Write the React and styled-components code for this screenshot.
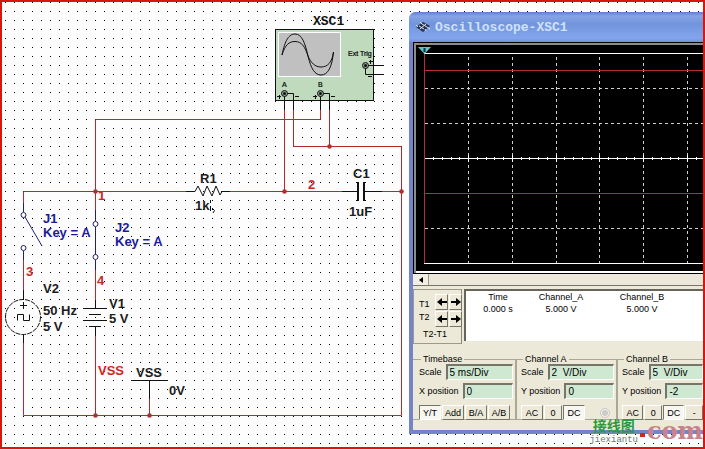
import styled, { createGlobalStyle } from "styled-components";

const RED = "#b8292b";
const NAVY = "#22226a";

const WIRES = [
  "M320.5 110V119.5H95.5V210",
  "M284.5 110V191",
  "M293.5 110V146.5H401.5V415.5",
  "M329.5 110V146",
  "M23.5 203V191.5H186",
  "M230 191.5H342",
  "M382 191.5H401",
  "M23.5 260V290",
  "M95.5 270V300",
  "M23.5 343V415.5H401.5",
  "M95.5 336V415",
  "M149.5 399V415",
];

const LEADS = [
  "M284.5 96V110",
  "M287 93.5H293.5V110",
  "M320.5 96V110",
  "M323 93.5H329.5V110",
  "M368 65.5H384",
  "M365.5 68V74.5H384",
  "M186 191.5H195L198 186L203 196L207 186L212 196L216 186L220 195L222 191.5H230",
  "M342 191.5H357M366 191.5H382",
  "M23.5 290V299M23.5 335V343",
  "M20 305.5H27M23.5 302V309",
  "M17.5 320.5V314.5H23.5V320.5H29.5V314.5",
  "M95.5 300V308M95.5 326V336",
  "M83 308.5H107M89 314.5H101M83 320.5H107M89 326.5H101",
  "M131 380.5H168M149.5 381V399",
];

const JUNCTIONS = [
  [95, 191],
  [284, 191],
  [401, 191],
  [329, 146],
  [95, 415],
  [149, 415],
];

const LABELS = [
  { x: 200, y: 183, text: "R1" },
  { x: 195, y: 210, text: "1k" },
  { x: 353, y: 178, text: "C1" },
  { x: 349, y: 216, text: "1uF" },
  { x: 43, y: 293, text: "V2" },
  { x: 43, y: 315, text: "50 Hz" },
  { x: 43, y: 331, text: "5 V" },
  { x: 109, y: 308, text: "V1" },
  { x: 109, y: 323, text: "5 V" },
  { x: 136, y: 377, text: "VSS" },
  { x: 169, y: 395, text: "0V" },
  { x: 43, y: 223, text: "J1", color: "#1a1aa0" },
  { x: 43, y: 237, text: "Key = A", color: "#1a1aa0" },
  { x: 115, y: 232, text: "J2", color: "#1a1aa0" },
  { x: 115, y: 246, text: "Key = A", color: "#1a1aa0" },
  { x: 98, y: 200, text: "1", color: "#c8282a" },
  { x: 308, y: 189, text: "2", color: "#c8282a" },
  { x: 26, y: 276, text: "3", color: "#c8282a" },
  { x: 97, y: 285, text: "4", color: "#c8282a" },
  { x: 98, y: 375, text: "VSS", color: "#d81e1e" },
];

const TERMINALS = [
  [284, 93],
  [320, 93],
  [365, 65],
];

function Schematic() {
  return (
    <SchematicArea viewBox="2 2 407 445">
      {WIRES.map((d) => (
        <Line key={d} d={d} $color={RED} />
      ))}

      <ScopeName x="313" y="25">
        XSC1
      </ScopeName>
      <rect x="275.5" y="29.5" width="98" height="71" fill="#bfdabd" stroke="#111" />
      <rect x="278.5" y="32.5" width="62" height="44" fill="#c0c0c0" stroke="#fff" />
      <Line d="M282 55C285 40 289 34 295 34C302 34 305 43 308 56C311 69 315 75 321 75C328 75 332 67 333.5 52" />
      <Line d="M282 55C285 45 289 41.5 295 41.5C302 41.5 305 47 308 56C311 63 315 67 321 67C328 67 332 62 333.5 52" />
      {LEADS.map((d) => (
        <Line key={d} d={d} />
      ))}
      {TERMINALS.map(([x, y]) => (
        <g key={`${x}-${y}`}>
          <circle cx={x + 0.5} cy={y + 0.5} r="3" fill="#8fa48e" stroke="#111" />
          <circle cx={x + 0.5} cy={y + 0.5} r="1.5" fill="#111" />
        </g>
      ))}
      <Line d="M277 96.5H281M279.5 95V99M295 96.5H299M313 96.5H317M315.5 95V99M331 96.5H335" />
      <Line d="M369 61.5H373M370.5 60V64M368 76.5H372" />
      <PinLabel x="282" y="87">
        A
      </PinLabel>
      <PinLabel x="318" y="87">
        B
      </PinLabel>
      <PinLabel x="348" y="56">
        Ext Trig
      </PinLabel>

      <Line
        $color={NAVY}
        d="M23.5 203V212M25 217L42 246M23.5 251V260M95.5 210V221M95.5 227V254M95.5 260V270"
      />
      {[
        [23.5, 215],
        [23.5, 248],
        [95.5, 224],
        [95.5, 257],
      ].map(([x, y]) => (
        <circle key={`${x}-${y}`} cx={x} cy={y} r="2.5" fill="#fff" stroke={NAVY} />
      ))}
      <circle cx="23" cy="317" r="17.5" fill="none" stroke="#111" strokeDasharray="5 1" />
      <path d="M358 182V201M364 182V201" stroke="#111" strokeWidth="2" />
      <Line d="M210.5 200V203M210.5 206V211M212 208L214.5 210.5L213 213" />

      {JUNCTIONS.map(([x, y]) => (
        <circle key={`${x}-${y}`} cx={x + 0.5} cy={y + 0.5} r="2.3" fill={RED} />
      ))}
      {LABELS.map((label) => (
        <PartLabel key={`${label.x}-${label.y}`} x={label.x} y={label.y} $color={label.color}>
          {label.text}
        </PartLabel>
      ))}
    </SchematicArea>
  );
}

const COLUMNS = Array.from({ length: 24 }, (_, i) => Math.round(468 + i * 43.8));

function ScopeGrid() {
  return (
    <Grid>
      <g transform="translate(-416 -45)" fill="none" shapeRendering="crispEdges">
        <path d="M424 53.5H1600M424 263.5H1600" stroke="#fff" />
        <path
          d="M425 88.5H1600M425 123.5H1600M425 228.5H1600"
          stroke="#d0d0d0"
          strokeDasharray="3 3"
        />
        {COLUMNS.map((x) => (
          <path key={x} d={`M${x}.5 57V263`} stroke="#d0d0d0" strokeDasharray="3 3" />
        ))}
        <path d="M425 158.5H1600" stroke="#fff" />
        <path
          d="M433 158.5H1600"
          stroke="#fff"
          strokeWidth="3"
          strokeDasharray="1 7.76"
        />
        {COLUMNS.map((x) => (
          <path key={x} d={`M${x}.5 155V162`} stroke="#fff" />
        ))}
        <path d="M424.5 54V263M424 70.5H1600M424 193.5H1600" stroke="#b82c38" />
      </g>
      <g transform="translate(-416 -45)">
        <path d="M418 47H431L424.5 54Z" fill="#56c8c8" />
        <path d="M424.5 48V52" stroke="#0b2a4a" strokeWidth="2" />
      </g>
    </Grid>
  );
}

function TitleIcon() {
  return (
    <svg width="16" height="12" viewBox="0 0 16 12">
      <path d="M1 6L8 1L15 5L8 11Z" fill="#26304f" />
      <path
        d="M4 5L9 8M7 3L12 6M5 8L11 3M1 4L3 6M11 10L10 8M5 1L7 3M15 8L12 6"
        stroke="#dfe6f5"
        fill="none"
      />
    </svg>
  );
}

function Arrow({ right }) {
  return (
    <svg width="10" height="8" viewBox="0 0 10 8">
      <path
        d={right ? "M10 4L5 0V3H0V5H5V8Z" : "M0 4L5 0V3H10V5H5V8Z"}
        fill="#000"
      />
    </svg>
  );
}

function Group({ title, id, scale, axis, position, children }) {
  return (
    <GroupBox>
      <legend>{title}</legend>
      <Field>
        <label htmlFor={`${id}-scale`}>Scale</label>
        <ValueInput id={`${id}-scale`} defaultValue={scale} />
      </Field>
      <Field>
        <label htmlFor={`${id}-position`}>{axis} position</label>
        <ValueInput id={`${id}-position`} defaultValue={position} />
      </Field>
      <ButtonRow>{children}</ButtonRow>
    </GroupBox>
  );
}

function Oscilloscope() {
  return (
    <Window>
      <TitleBar>
        <TitleIcon />
        <Title>Oscilloscope-XSC1</Title>
      </TitleBar>
      <Body>
        <Display>
          <ScopeGrid />
        </Display>
        <ScrollBar>
          <ScrollButton aria-label="Scroll left">
            <svg width="4" height="6" viewBox="0 0 4 6">
              <path d="M0 3L4 0V6Z" />
            </svg>
          </ScrollButton>
        </ScrollBar>

        <Readout>
          <Cursors>
            <CursorNames>
              <span>T1</span>
              <span>T2</span>
            </CursorNames>
            <CursorButton aria-label="T1 left">
              <Arrow />
            </CursorButton>
            <CursorButton aria-label="T1 right">
              <Arrow right />
            </CursorButton>
            <CursorButton aria-label="T2 left">
              <Arrow />
            </CursorButton>
            <CursorButton aria-label="T2 right">
              <Arrow right />
            </CursorButton>
            <Difference>T2-T1</Difference>
          </Cursors>
          <Values>
            <table>
              <colgroup>
                <col width="64" />
                <col width="62" />
                <col width="100" />
              </colgroup>
              <thead>
                <tr>
                  <th>Time</th>
                  <th>Channel_A</th>
                  <th>Channel_B</th>
                </tr>
              </thead>
              <tbody>
                <tr>
                  <td>0.000 s</td>
                  <td>5.000 V</td>
                  <td>5.000 V</td>
                </tr>
              </tbody>
            </table>
          </Values>
        </Readout>

        <Groups>
          <Group title="Timebase" id="time" scale="5 ms/Div" axis="X" position="0">
            <PushButton $pressed>Y/T</PushButton>
            <PushButton>Add</PushButton>
            <PushButton>B/A</PushButton>
            <PushButton>A/B</PushButton>
          </Group>
          <Group title="Channel A" id="a" scale="2  V/Div" axis="Y" position="0">
            <PushButton>AC</PushButton>
            <PushButton $narrow>0</PushButton>
            <PushButton $pressed>DC</PushButton>
            <Trigger type="radio" aria-label="Channel A input" disabled defaultChecked />
          </Group>
          <Group title="Channel B" id="b" scale="5  V/Div" axis="Y" position="-2">
            <PushButton>AC</PushButton>
            <PushButton $narrow>0</PushButton>
            <PushButton $pressed>DC</PushButton>
            <PushButton $narrow>-</PushButton>
          </Group>
        </Groups>
      </Body>
    </Window>
  );
}

function App() {
  return (
    <Workspace>
      <GlobalStyle />
      <Schematic />
      <Oscilloscope />
      <Watermark>
        <SiteName>
          <Chinese>接线图</Chinese>
          <Pinyin>jiexiantu</Pinyin>
        </SiteName>
        <RedDot />
        <Domain>com</Domain>
      </Watermark>
    </Workspace>
  );
}

export default App;

const GlobalStyle = createGlobalStyle`
  * {
    box-sizing: border-box;
  }

  body {
    margin: 0;
    font-family: "Liberation Sans", Arial, sans-serif;
  }
`;

const Workspace = styled.main`
  position: relative;
  display: flex;
  align-items: flex-start;
  min-height: 100vh;
  overflow: hidden;
  border: 2px solid #d8160c;
  background-color: #fdfdfd;
  background-image: conic-gradient(from 270deg at 1px 1px, #000 90deg, transparent 0);
  background-size: 9px 9px;
  background-position: 3px 0;
`;

const SchematicArea = styled.svg`
  flex: none;
  width: 407px;
  height: 445px;
`;

const Line = styled.path`
  fill: none;
  stroke: ${(props) => props.$color || "#111"};
  stroke-width: 1;
`;

const PartLabel = styled.text`
  font-size: 13px;
  font-weight: bold;
  fill: ${(props) => props.$color || "#1c1c1c"};
`;

const ScopeName = styled.text`
  font-family: "Liberation Mono", "Courier New", monospace;
  font-size: 13px;
  font-weight: bold;
  fill: #111;
`;

const PinLabel = styled.text`
  font-size: 7px;
  fill: #000;
  stroke: #000;
  stroke-width: 0.2;
`;

const Window = styled.section`
  flex: 1;
  min-width: 0;
  margin-top: 10px;
  padding: 0 0 4px 4px;
  overflow: hidden;
  border-top-left-radius: 7px;
  background: #7583cb;
`;

const TitleBar = styled.header`
  display: flex;
  align-items: center;
  gap: 4px;
  height: 30px;
  margin-left: -4px;
  padding-left: 6px;
  background: linear-gradient(#5f7fcf, #86a3e6 4px, #7294dc 12px, #82a5ee 26px, #7492d8);
`;

const Title = styled.h1`
  margin: 0;
  font-family: "Liberation Mono", "Courier New", monospace;
  font-size: 13px;
  font-weight: bold;
  color: #cfe2fb;
`;

const Body = styled.div`
  padding-bottom: 10px;
  background: #ece9d8;
  font-size: 9px;
  line-height: 10px;
  color: #000;
`;

const Display = styled.div`
  padding: 2px 0 0 2px;
  border: 1px solid #000;
  border-right: 0;
  background: #8c8c88;
`;

const Grid = styled.svg`
  display: block;
  width: 100%;
  height: 228px;
  border-bottom: 2px solid #fff;
  background: #000;
`;

const ScrollBar = styled.div`
  height: 12px;
  border-bottom: 1px solid #77756a;
  background: #ebe8da;
`;

const ScrollButton = styled.button`
  display: flex;
  align-items: center;
  justify-content: center;
  width: 16px;
  height: 11px;
  padding: 0;
  border: 0;
  border-right: 1px solid #9d9a8b;
  background: #f1efe4;
`;

const Readout = styled.div`
  display: flex;
  align-items: flex-start;
  gap: 2px;
  padding-top: 3px;
`;

const Cursors = styled.div`
  display: grid;
  grid-template-columns: 15px 13px 13px;
  grid-template-rows: 16px 16px 12px;
  align-items: center;
  gap: 1px;
  width: 49px;
  height: 55px;
  padding: 4px 0 0 5px;
  border: 1px solid #9d9a8b;
  border-right-color: #8c897b;
`;

const CursorNames = styled.div`
  display: flex;
  flex-direction: column;
  grid-row: 1 / 3;
  gap: 3px;
`;

const CursorButton = styled.button`
  display: flex;
  align-items: center;
  justify-content: center;
  height: 16px;
  padding: 0;
  border: 1px solid;
  border-color: #fff #77756a #77756a #fff;
  background: #ece9d8;
`;

const Difference = styled.span`
  grid-column: 1 / -1;
  padding-left: 4px;
`;

const Values = styled.div`
  flex: 1;
  min-width: 0;
  height: 52px;
  overflow: hidden;
  border-top: 2px solid #66645b;
  border-left: 2px solid #66645b;
  background: #fff;

  table {
    width: 226px;
    table-layout: fixed;
    border-collapse: collapse;
  }

  th,
  td {
    height: 12px;
    padding: 0;
    font-weight: normal;
    text-align: center;
  }
`;

const Groups = styled.div`
  display: grid;
  grid-template-columns: 103px 101px minmax(0, 1fr);
  padding-top: 10px;
`;

const GroupBox = styled.fieldset`
  min-width: 0;
  height: 66px;
  margin: 0;
  padding: 0 2px 0 4px;
  border: 1px solid #aaa797;

  legend {
    margin-left: 2px;
    padding: 0 2px;
  }

  &:first-child {
    padding-left: 6px;
    border-left: 0;
  }

  &:last-child {
    padding-right: 0;
    border-right: 0;
  }
`;

const Field = styled.div`
  display: flex;
  align-items: center;
  gap: 4px;
  height: 16px;
  margin-bottom: 3px;
  white-space: nowrap;
`;

const ValueInput = styled.input`
  flex: 1;
  width: 0;
  min-width: 0;
  height: 16px;
  padding: 0 2px;
  border: 1px solid;
  border-width: 2px 1px 1px 2px;
  border-color: #77756a #fff #fff #77756a;
  background: #cfe8d2;
  font-family: inherit;
  font-size: 10px;
`;

const ButtonRow = styled.div`
  display: flex;
  align-items: center;
  gap: 1px;
  margin-top: 6px;
`;

const PushButton = styled.button`
  width: ${(props) => (props.$narrow ? 18 : 22)}px;
  height: 15px;
  padding: 0;
  border: 1px solid;
  border-color: ${(props) =>
    props.$pressed ? "#77756a #fff #fff #77756a" : "#fff #77756a #77756a #fff"};
  background: ${(props) => (props.$pressed ? "#f7f6f0" : "#ece9d8")};
  font-family: inherit;
  font-size: 9px;
  line-height: 10px;
`;

const Trigger = styled.input`
  width: 10px;
  height: 10px;
  margin: 0 4px 0 auto;
`;

const Watermark = styled.div`
  position: absolute;
  right: 0;
  bottom: 0;
  display: flex;
  align-items: center;
  gap: 2px;
`;

const SiteName = styled.div`
  display: flex;
  flex-direction: column;
  align-items: center;
`;

const Chinese = styled.span`
  font-family: "Liberation Serif", "Noto Sans CJK SC", sans-serif;
  font-size: 14px;
  font-weight: bold;
  line-height: 14px;
  color: #2a9a3c;
`;

const Pinyin = styled.span`
  font-family: "Liberation Mono", monospace;
  font-size: 9px;
  line-height: 12px;
  color: #74747c;
`;

const RedDot = styled.span`
  width: 5px;
  height: 4px;
  margin-top: 4px;
  background: #d8202a;
`;

const Domain = styled.span`
  padding-bottom: 4px;
  font-family: "DejaVu Serif", serif;
  font-size: 24px;
  font-weight: bold;
  line-height: 24px;
  color: #c9818c;
`;
